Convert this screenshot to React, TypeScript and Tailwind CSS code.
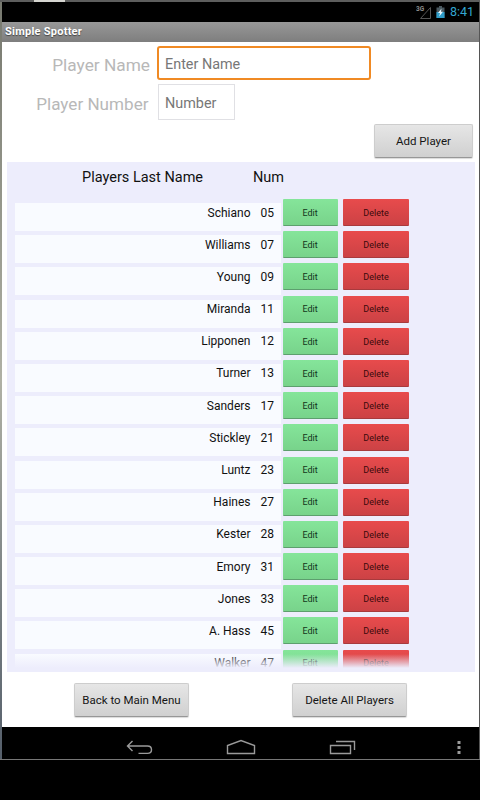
const players = [
  { name: 'Schiano', num: '05' },
  { name: 'Williams', num: '07' },
  { name: 'Young', num: '09' },
  { name: 'Miranda', num: '11' },
  { name: 'Lipponen', num: '12' },
  { name: 'Turner', num: '13' },
  { name: 'Sanders', num: '17' },
  { name: 'Stickley', num: '21' },
  { name: 'Luntz', num: '23' },
  { name: 'Haines', num: '27' },
  { name: 'Kester', num: '28' },
  { name: 'Emory', num: '31' },
  { name: 'Jones', num: '33' },
  { name: 'A. Hass', num: '45' },
  { name: 'Walker', num: '47' },
]

const grayButton =
  'h-[34px] rounded-[2px] border border-[#cdcdcd] border-b-[#979797] bg-linear-to-b from-[#e6e6e6] to-[#d0d0d0] pt-[2px] text-[11.5px] leading-none text-[#151515] shadow-[0_1px_1px_rgba(0,0,0,0.15)]'

/* ─── System bars ─── */

function StatusBar() {
  return (
    <div className="flex h-5 items-center justify-end bg-black pr-[5px]">
      <svg width="16" height="16" viewBox="0 0 16 16" fill="none" className="mr-[4px]" aria-hidden="true">
        <text x="0" y="7" fontSize="6.5" fontWeight="700" fill="#8c8c8c" fontFamily="Roboto, sans-serif">
          3G
        </text>
        <path d="M14.5 3.5v11h-10z" stroke="#555" />
      </svg>
      <svg width="9" height="13" viewBox="0 0 9 13" className="mr-[5px]" aria-hidden="true">
        <path d="M3 0h3v1.5h2.5V12h-8V1.5H3z" fill="#4a5960" />
        <path d="M.5 6h8v6h-8z" fill="#2f9cc8" />
        <path d="M5.5 2.5 2 7h2l-.8 3.5L7 5.8H5z" fill="#e8f6fc" />
      </svg>
      <span className="pt-[1px] text-[12.5px] leading-none text-[#33a6d0]">8:41</span>
    </div>
  )
}

function NavBar() {
  return (
    <div className="flex h-8 items-end bg-black pb-[4px] pl-[124px]">
      <svg width="27" height="16" viewBox="0 0 27 16" fill="none" stroke="#9a9a9a" strokeWidth="1.4" aria-hidden="true">
        <path d="M6.5 2 1.5 7l5 5M1.5 7h20q4 0 4 3.7t-4 3.7h-9" />
      </svg>
      <svg width="30" height="16" viewBox="0 0 30 16" fill="none" stroke="#9a9a9a" strokeWidth="1.4" className="ml-[73px]" aria-hidden="true">
        <path d="M1.5 14.5v-8L15 1.5l13.5 5v8z" />
      </svg>
      <svg width="28" height="16" viewBox="0 0 28 16" fill="none" stroke="#9a9a9a" strokeWidth="1.4" className="ml-[73px]" aria-hidden="true">
        <path d="M1.5 6.5h20v8h-20zM7 2.5h18.5V11" />
      </svg>
      <svg width="4" height="16" viewBox="0 0 4 16" fill="#9a9a9a" className="ml-[100px]" aria-hidden="true">
        <path d="M.5 2h3v3h-3zM.5 7h3v3h-3zM.5 12h3v3h-3z" />
      </svg>
    </div>
  )
}

/* ─── Form ─── */

function PlayerForm() {
  return (
    <div className="flex h-[120px] flex-col pt-[4px]">
      <div className="flex h-[34px] items-center">
        <label htmlFor="name" className="w-[148px] pt-[6px] text-right text-[17.3px] leading-none text-[#b8b8b8]">
          Player Name
        </label>
        <input
          id="name"
          placeholder="Enter Name"
          className="ml-[7px] h-[34px] w-[214px] rounded-[3px] border-2 border-[#f08a24] bg-white px-[6px] pt-[2px] text-[14.4px] text-[#777] outline-none placeholder:text-[#777]"
        />
      </div>
      <div className="mt-[4px] flex h-[36px] items-center">
        <label htmlFor="number" className="w-[146.5px] pt-[6px] text-right text-[17.1px] leading-none text-[#b8b8b8]">
          Player Number
        </label>
        <input
          id="number"
          placeholder="Number"
          className="ml-[9.5px] h-[36px] w-[77px] border border-[#e0e0e4] bg-white px-[6px] pt-[2px] text-[14.4px] text-[#777] outline-none placeholder:text-[#777]"
        />
      </div>
      <button className={`${grayButton} mt-[4px] mr-[6px] w-[99px] self-end`}>Add Player</button>
    </div>
  )
}

/* ─── Roster ─── */

function PlayerRow({ name, num }: { name: string; num: string }) {
  return (
    <div className="flex h-[32.2px] shrink-0 items-start">
      <div className="mt-[4px] flex h-[28px] w-[266px] bg-[#f9fbff] pt-[3.5px] text-[12px] leading-[13px] text-[#111]">
        <span className="w-[235.5px] text-right">{name}</span>
        <span className="ml-[10px]">{num}</span>
      </div>
      <button className="ml-[2px] h-[27px] w-[55px] rounded-[1px] border-b border-[#5d9f6e] bg-linear-to-b from-[#85e59a] to-[#78d38b] pt-[3px] pr-[1px] text-[9px] text-[#12351b]">
        Edit
      </button>
      <button className="ml-[5px] h-[27px] w-[66px] rounded-[1px] border-b border-[#a83a3d] bg-linear-to-b from-[#e84b4c] to-[#cc4245] pt-[3px] text-[9px] text-[#3a0a0c]">
        Delete
      </button>
    </div>
  )
}

function Roster() {
  return (
    <div className="mr-[4px] ml-[5px] flex h-[510px] flex-col bg-[#ededfc]">
      <div className="flex h-[37px] pt-[7px] pl-[75px] text-[14.5px] leading-[17px] text-[#111]">
        <span className="w-[171px]">Players Last Name</span>
        <span>Num</span>
      </div>
      <div className="relative flex h-[473px] flex-col overflow-hidden pl-[8px]">
        {players.map((p) => (
          <PlayerRow key={p.num} name={p.name} num={p.num} />
        ))}
        {/* fading edge of the scroll view */}
        <div className="absolute inset-x-0 bottom-[4px] h-[14px] bg-linear-to-b from-[#ededfc]/0 to-[#ededfc]" />
        <div className="absolute inset-x-0 bottom-0 h-[4px] bg-[#ededfc]" />
      </div>
    </div>
  )
}

export default function App() {
  return (
    <div className="h-[800px] w-[480px] overflow-hidden bg-black font-['Roboto',sans-serif]">
      <div className="flex h-[2px] bg-[#5d5e5d]">
        <div className="ml-[34px] w-[31px] bg-[#d5d5d0]" />
      </div>
      <div className="flex h-[757px]">
        <div className="w-[2px] bg-linear-to-b from-[#77796f] via-[#b0b1a5] to-[#555f6b]" />
        <div className="flex w-[477px] flex-col bg-white">
          <StatusBar />
          <div className="flex h-5 items-center bg-linear-to-b from-[#989898] to-[#7e7e7e] pt-[1px] pl-[3px] text-[11px] font-bold tracking-[0.25px] text-white [text-shadow:0_1px_1px_#444]">
            Simple Spotter
          </div>
          <PlayerForm />
          <Roster />
          <div className="flex h-[55px] pt-[11px] pl-[72px]">
            <button className={`${grayButton} w-[115px]`}>Back to Main Menu</button>
            <button className={`${grayButton} ml-[103px] w-[115px]`}>Delete All Players</button>
          </div>
          <NavBar />
        </div>
        <div className="w-px bg-[#555]" />
      </div>
      <div className="h-px bg-[#777]" />
    </div>
  )
}
